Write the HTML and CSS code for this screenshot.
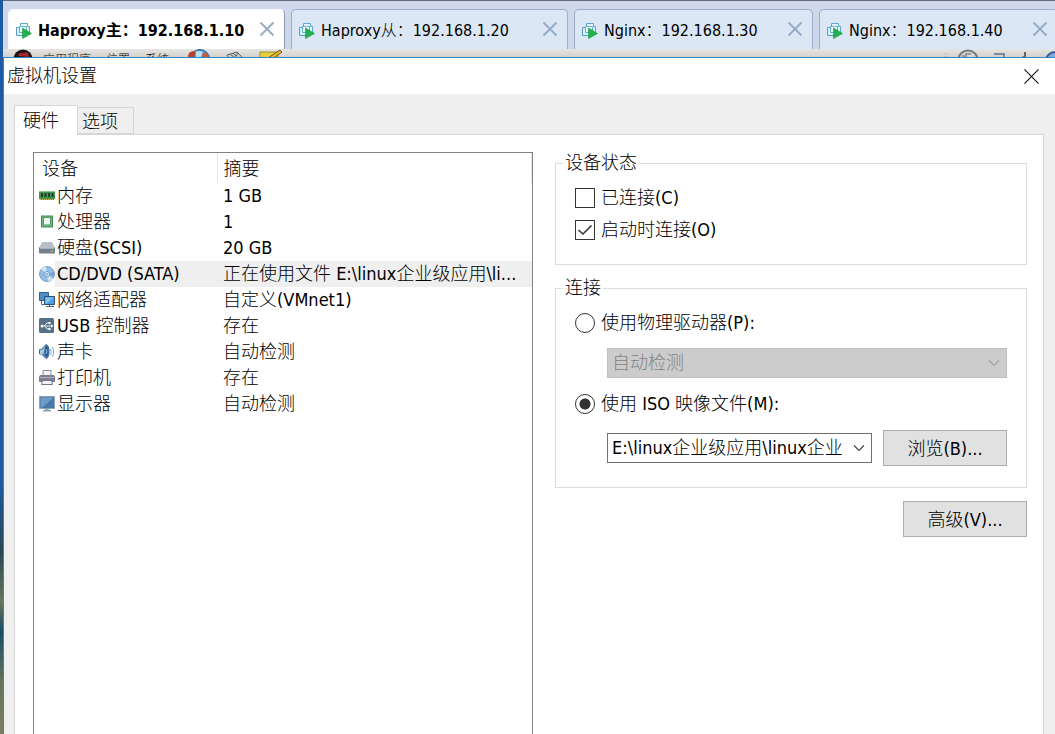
FILE: index.html
```html
<!DOCTYPE html>
<html lang="zh-CN">
<head>
<meta charset="utf-8">
<title>虚拟机设置</title>
<link rel="stylesheet" href="styles.css">
</head>
<body>
<svg class="defs" aria-hidden="true">
  <symbol id="close" viewBox="0 0 16 16"><path d="M1.5 1.5l13 13M14.5 1.5l-13 13" fill="none" stroke="currentColor" stroke-width="2"/></symbol>
  <symbol id="chevron" viewBox="0 0 12 8"><path d="M1 1.5l5 5 5-5" fill="none" stroke="currentColor" stroke-width="1.2"/></symbol>
  <symbol id="vm" viewBox="0 0 16 16">
    <path d="M4.5 4V.5h7v3h2v7H9" fill="#e9f6fb" stroke="#5aa7cf"/>
    <path d="M.5 4.500h8v8h-8z" fill="#dceff8" stroke="#5a9dcb"/>
    <path d="M3.500 3.500h7v6h-7z" fill="#f0fafd" stroke="#62b2d3"/>
    <path d="M6.500 5l9 5.500-9 5z" fill="#22b14c" stroke="#159a3c" stroke-width=".6"/>
  </symbol>
</svg>
<div class="app">
  <nav class="vm-tabs" aria-label="虚拟机">
    <div class="vm-tab wide active">
      <button class="vm-name"><svg class="ico"><use href="#vm"/></svg>Haproxy主：192.168.1.10</button>
      <button class="vm-close" aria-label="关闭"><svg><use href="#close"/></svg></button>
    </div>
    <div class="vm-tab wide">
      <button class="vm-name"><svg class="ico"><use href="#vm"/></svg>Haproxy从：192.168.1.20</button>
      <button class="vm-close" aria-label="关闭"><svg><use href="#close"/></svg></button>
    </div>
    <div class="vm-tab">
      <button class="vm-name"><svg class="ico"><use href="#vm"/></svg>Nginx：192.168.1.30</button>
      <button class="vm-close" aria-label="关闭"><svg><use href="#close"/></svg></button>
    </div>
    <div class="vm-tab">
      <button class="vm-name"><svg class="ico"><use href="#vm"/></svg>Nginx：192.168.1.40</button>
      <button class="vm-close" aria-label="关闭"><svg><use href="#close"/></svg></button>
    </div>
  </nav>
  <div class="guest-bar">
    <svg class="g-hat" viewBox="0 0 20 20"><circle cx="10" cy="10" r="9.500" fill="#1b1416"/><path d="M5 7q1-4 4-3 3 0 5-1 2 2 2 5z" fill="#a3242c"/></svg>
    <span>应用程序</span><span>位置</span><span>系统</span>
    <svg class="g-globe" viewBox="0 0 24 20"><circle cx="13" cy="10" r="9.500" fill="#4b93c8" stroke="#2b5d94"/><path d="M8 3q4-2 8 0l-2 5H9z" fill="#b9e0ee"/><path d="M1 8q0-6 6-6l2 2-3 6z" fill="#b7432f"/><path d="M15 5l5-1 2 5h-6z" fill="#c95b35"/></svg>
    <svg class="g-mail" viewBox="0 0 18 20"><path d="M1 6l10-3 6 6-11 6z" fill="#c3c9c8" stroke="#60686b"/><path d="M4 5l5 4 3-5M7 4l3 3" fill="none" stroke="#60686b"/></svg>
    <svg class="g-note" viewBox="0 0 24 20"><path d="M1 3h18v15H1z" fill="#e6d03d" stroke="#a08f28"/><path d="M9 9L21 1l2 2-11 8z" fill="#e8b43a" stroke="#70551c"/></svg>
    <span class="spacer"></span>
    <svg class="g-tray" viewBox="0 0 112 20"><path d="M2 4v14M5 4v14" stroke="#aaa" stroke-dasharray="1 2"/><circle cx="25" cy="11" r="9.500" fill="#d8d8d8" stroke="#77797b" stroke-width="2"/><path d="M19 7h4v-2h5" fill="none" stroke="#999" stroke-width="2"/><path d="M51 5h10v4H51" fill="none" stroke="#7a8b9d" stroke-width="2"/><path d="M82 3v4l-4 3h5" fill="none" stroke="#606569" stroke-width="2"/><circle cx="112" cy="12" r="9" fill="#87aadb" stroke="#2b5799" stroke-width="2"/></svg>
  </div>

  <main class="dialog">
    <header class="title-bar">
      <h1>虚拟机设置</h1>
      <button class="dlg-close" aria-label="关闭"><svg viewBox="0 0 16 16"><path d="M.5.5l15 15M15.500.5l-15 15" fill="none" stroke="#111" stroke-width="1.200"/></svg></button>
    </header>
    <div class="dlg-body">
      <div class="tabs" role="tablist">
        <button class="tab selected" role="tab" aria-selected="true">硬件</button>
        <button class="tab" role="tab" aria-selected="false">选项</button>
      </div>
      <div class="page" role="tabpanel">
        <div class="device-list">
          <table>
            <thead><tr><th scope="col">设备</th><th scope="col">摘要</th></tr></thead>
            <tbody>
              <tr><td><span class="dev"><svg viewBox="0 0 16 16"><path d="M0 3h16v8h-1v1H1v-1H0z" fill="#4a9155"/><path d="M2 5h2v4H2zM5.500 5h2v4h-2zM9 5h2v4H9zM12.500 5h2v4h-2z" fill="#1b4527"/><path d="M1 11.500h14" stroke="#c9c05a" stroke-dasharray="1 1"/><path d="M0 3.500h16" stroke="#8cc892"/></svg>内存</span></td><td>1 GB</td></tr>
              <tr><td><span class="dev"><svg viewBox="0 0 16 16"><path d="M2 1.500h12v12H2z" fill="#3f8e57"/><path d="M3 2.500h10v10H3z" fill="#6fb67e"/><path d="M4.500 3.500h7v6.500l-1 1h-6z" fill="#f0f5ef" stroke="#5a9a6a"/></svg>处理器</span></td><td>1</td></tr>
              <tr><td><span class="dev"><svg viewBox="0 0 16 16"><path d="M3 2h10l3 6H0z" fill="#b9bfc7"/><path d="M0 7.500h16v5q0 1-1 1H1q-1 0-1-1z" fill="#76808c"/><path d="M1 8h14" stroke="#dbe0e5"/><path d="M12 11h2" stroke="#a8e36b"/></svg>硬盘(SCSI)</span></td><td>20 GB</td></tr>
              <tr class="current"><td><span class="dev"><svg viewBox="0 0 16 16"><circle cx="8" cy="8" r="7.500" fill="#93bce0" stroke="#7ba3cb"/><path d="M8 8L2 3q2-2 5-2.500zM8 8l6 5q-2 2-5 2.300z" fill="#cfe5f6"/><path d="M8 8l7-2v4z" fill="#6f9fd0"/><circle cx="8" cy="8" r="2.500" fill="#eaf4fb" stroke="#6797c6"/><circle cx="8" cy="8" r="1" fill="#7599bd"/></svg>CD/DVD (SATA)</span></td><td>正在使用文件 E:\linux企业级应用\li...</td></tr>
              <tr><td><span class="dev"><svg viewBox="0 0 16 16"><path d="M.5.500h9v8h-9z" fill="#4c8fc4" stroke="#325f8a"/><path d="M2.500 8.500v4h3" fill="none" stroke="#41688c"/><path d="M5.500 4.500h10v8h-10z" fill="#4b9ddb" stroke="#284f79"/><path d="M6.500 5.500h8l-7 6h-1z" fill="#85c4ee"/><path d="M10.500 13v2M7 14.500h8" stroke="#46637f"/></svg>网络适配器</span></td><td>自定义(VMnet1)</td></tr>
              <tr><td><span class="dev"><svg viewBox="0 0 16 16"><rect y="0" width="15" height="15" rx="1.500" fill="#56708a"/><path d="M2 8h11M5 8l3-3h2M6 8l2 3h2" fill="none" stroke="#e5eef4"/><circle cx="3" cy="8" r="1.500" fill="#fff"/><path d="M12 6.200L14.500 8 12 9.800zM9.500 4h2v2h-2z" fill="#fff"/><circle cx="10.500" cy="11" r="1.200" fill="#fff"/></svg>USB 控制器</span></td><td>存在</td></tr>
              <tr><td><span class="dev"><svg viewBox="0 0 16 16"><path d="M.5 5.500h2L7 .5q3 .5 3 7t-3 7l-4.500-4.500h-2z" fill="#5b93c6" stroke="#416b96"/><path d="M1 6h2l4-4-3 8H1z" fill="#a6cee9"/><ellipse cx="7.500" cy="7.500" rx="2" ry="5.500" fill="#2a5688"/><path d="M7 5q2 2 0 5" fill="none" stroke="#a6cee9"/><path d="M11.500 5q1.500 3 0 6M13.500 3q2.500 5 0 10" fill="none" stroke="#8aaac7"/></svg>声卡</span></td><td>自动检测</td></tr>
              <tr><td><span class="dev"><svg viewBox="0 0 16 16"><path d="M4 .5h8v6H4z" fill="#f5f5f8" stroke="#898a99"/><path d="M1 5h14l1 2v5H0V7z" fill="#7d7e92"/><path d="M1 7.500h14" stroke="#b5b5c2"/><path d="M3.500 10.500h9l1 4h-11z" fill="#f4f4f8" stroke="#75778a"/></svg>打印机</span></td><td>存在</td></tr>
              <tr><td><span class="dev"><svg viewBox="0 0 16 16"><path d="M.5.500h15v12H.5z" fill="#4878aa" stroke="#8ba3b9"/><path d="M1.500 1.500h13l-11 10h-2z" fill="#709bc5"/><path d="M6 13h4v1h2v1.500H4V14h2z" fill="#8ea2b6"/></svg>显示器</span></td><td>自动检测</td></tr>
            </tbody>
          </table>
        </div>
        <form class="settings">
          <fieldset>
            <legend>设备状态</legend>
            <label class="option"><input type="checkbox">已连接(C)</label>
            <label class="option"><input type="checkbox" checked>启动时连接(O)</label>
          </fieldset>
          <fieldset class="connection">
            <legend>连接</legend>
            <label class="option"><input type="radio" name="source">使用物理驱动器(P):</label>
            <div class="source">
              <div class="combo"><select disabled aria-label="物理驱动器"><option>自动检测</option></select><svg><use href="#chevron"/></svg></div>
            </div>
            <label class="option"><input type="radio" name="source" checked>使用 ISO 映像文件(M):</label>
            <div class="source">
              <div class="combo"><select aria-label="ISO 映像文件"><option>E:\linux企业级应用\linux企业</option></select><svg><use href="#chevron"/></svg></div>
              <button type="button" class="push">浏览(B)...</button>
            </div>
          </fieldset>
          <button type="button" class="push advanced">高级(V)...</button>
        </form>
      </div>
    </div>
  </main>
</div>
</body>
</html>
```
FILE: styles.css
```css
* { box-sizing: border-box; }

body {
  margin: 0;
  color: #000;
  font: 300 18px/26px "DejaVu Sans Condensed", "Noto Sans CJK SC", sans-serif;
}

button, select, input {
  margin: 0;
  font: inherit;
  color: inherit;
}

svg { display: block; flex: none; }
.defs { display: none; }

.app {
  display: flex;
  flex-direction: column;
  min-height: 100vh;
  padding-left: 3px;
  overflow: hidden;
  background: linear-gradient(#1d5aa6 0, #1d5aa6 65%, #284753 75%, #67745d 82%, #174e66 86%, #66735b 93%, #788064) 0 0 / 3px 100% no-repeat;
}

/* virtual machine tabs */
.vm-tabs {
  display: flex;
  gap: 6px;
  height: 49px;
  padding: 8px 0 0 5px;
  border-top: 1px solid #666a7a;
  background: #cfd8eb;
}

.vm-tab {
  display: flex;
  flex: none;
  align-items: center;
  width: 239px;
  padding: 2px 9px 0 7px;
  border: 1px solid #9cadca;
  border-bottom: 0;
  border-radius: 5px 5px 0 0;
  background: #dbe7f5;
  font-size: 16px;
}

.vm-tab.wide { width: 277px; }

.vm-tab.active {
  border-color: #f5f8fd #8c9bb8 #fff #f5f8fd;
  background: #fff;
  font-weight: bold;
}

.vm-name {
  display: flex;
  flex: 1;
  align-items: center;
  gap: 6px;
  padding: 0;
  border: 0;
  background: none;
  white-space: nowrap;
}

.vm-name .ico { width: 16px; height: 16px; }

.vm-close {
  padding: 0 0 3px;
  border: 0;
  background: none;
  color: #96adc8;
}

.vm-close svg { width: 16px; height: 16px; }

/* guest desktop panel, covered by the dialog */
.guest-bar {
  display: flex;
  gap: 15px;
  height: 8px;
  padding-left: 10px;
  overflow: hidden;
  background: linear-gradient(#e7e5e1, #d3d2cf);
  font-size: 12px;
  line-height: 22px;
}

.guest-bar span { flex: none; }
.guest-bar .spacer { flex: 1; }
.g-hat { width: 20px; height: 20px; margin-right: -5px; }
.g-globe { width: 24px; height: 20px; margin-left: 3px; }
.g-mail { width: 18px; height: 20px; }
.g-note { width: 24px; height: 20px; }
.g-tray { width: 112px; height: 20px; }

/* settings dialog */
.dialog {
  display: flex;
  flex: 1;
  flex-direction: column;
  border: solid #2e86c4;
  border-width: 1px 0 0 1px;
  background: #efefef;
}

.title-bar {
  display: flex;
  align-items: center;
  justify-content: space-between;
  height: 36px;
  padding: 0 16px 0 3px;
  background: #fff;
}

.title-bar h1 {
  margin: 0;
  font-size: 18px;
  font-weight: inherit;
}

.dlg-close {
  padding: 0;
  border: 0;
  background: none;
}

.dlg-close svg { width: 15px; height: 15px; }

.dlg-body {
  display: flex;
  flex: 1;
  flex-direction: column;
  padding: 10px 11px 0 10px;
}

.tabs {
  display: flex;
  align-items: flex-end;
  height: 30px;
}

.tab {
  width: 56px;
  height: 27px;
  padding: 1px 10px 0 4px;
  border: 1px solid #d6d6d6;
  border-left: 0;
  background: #efefef;
  text-align: left;
}

.tab.selected {
  z-index: 1;
  width: 64px;
  height: 30px;
  margin-bottom: -1px;
  padding: 0 0 0 8px;
  border-left: 1px solid #d6d6d6;
  border-bottom: 0;
  background: #fff;
}

.page {
  display: grid;
  flex: 1;
  grid-template-columns: minmax(0, 500fr) minmax(0, 472fr);
  gap: 22px;
  padding: 17px 16px 0 18px;
  border: 1px solid #d6d6d6;
  border-bottom: 0;
  background: #fff;
}

.device-list {
  border: 1px solid #828282;
  border-bottom: 0;
}

.device-list table {
  width: 100%;
  border-collapse: collapse;
  table-layout: fixed;
}

.device-list th {
  height: 30px;
  padding: 2px 0 0 8px;
  border-right: 1px solid #e5e5e5;
  font-weight: inherit;
  text-align: left;
}

.device-list th:first-child { width: 183px; }

.device-list td {
  height: 26px;
  padding: 0;
  overflow: hidden;
  white-space: nowrap;
}

.device-list td:first-child { padding-left: 5px; }

.device-list th + th,
.device-list td + td { padding-left: 6px; }

.dev {
  display: flex;
  align-items: center;
  gap: 2px;
}

.dev svg { width: 16px; height: 16px; }

.current td { background: #efefef; }
.current td:first-child { background: linear-gradient(to right, #fff 21px, #efefef 21px); }

.settings {
  display: flex;
  flex-direction: column;
}

fieldset {
  min-width: 0;
  margin: 0 0 12px;
  padding: 8px 19px 18px;
  border: 1px solid #dcdcdc;
}

fieldset.connection {
  margin-bottom: 13px;
  padding-bottom: 21px;
}

legend {
  margin-left: -12px;
  padding: 0 2px;
  line-height: 22px;
}

.option {
  display: flex;
  align-items: center;
  gap: 6px;
  height: 32px;
}

.option input {
  appearance: none;
  flex: none;
  width: 20px;
  height: 20px;
  border: 1px solid #333;
  background: #fff;
}

.option input[type="checkbox"]:checked {
  background: url("data:image/svg+xml,%3Csvg xmlns='http://www.w3.org/2000/svg' viewBox='0 0 18 18'%3E%3Cpath d='M2.500 9l4.500 4 8.500-8.500' fill='none' stroke='%23333' stroke-width='1.600'/%3E%3C/svg%3E");
}

.option input[type="radio"] { border-radius: 50%; }

.option input[type="radio"]:checked {
  background: radial-gradient(circle, #333 5px, #fff 6px);
}

.source {
  display: flex;
  align-items: center;
  gap: 11px;
  margin: 9px 0 10px 32px;
}

.source:last-child {
  margin-top: 10px;
  margin-bottom: 0;
}

.combo {
  display: grid;
  flex: 1;
  min-width: 0;
  align-items: center;
}

.combo > * { grid-area: 1 / 1; }

.combo select {
  appearance: none;
  width: 100%;
  height: 30px;
  padding: 0 26px 0 4px;
  border: 1px solid #707070;
  border-radius: 0;
  background: #fff;
}

.combo select:disabled {
  border-color: #bfbfbf;
  background: #ccc;
  color: #838383;
  opacity: 1;
}

.combo svg {
  justify-self: end;
  width: 12px;
  height: 8px;
  margin-right: 7px;
  color: #444;
  pointer-events: none;
}

.combo select:disabled + svg { color: #a0a0a0; }

.push {
  width: 124px;
  height: 36px;
  padding: 1px 0 0;
  border: 1px solid #adadad;
  background: #e1e1e1;
}

.advanced { align-self: flex-end; }
```
